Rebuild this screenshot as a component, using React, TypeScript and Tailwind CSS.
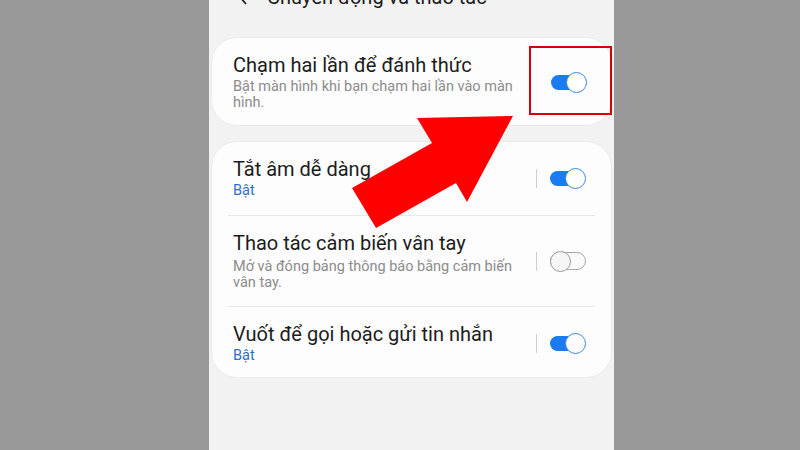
import React from "react";

const font = { fontFamily: "Roboto, 'Noto Sans', sans-serif" };

function Toggle({ on }: { on: boolean }) {
  if (on) {
    return (
      <div className="relative w-[36px] h-[21px] flex items-center shrink-0">
        <div className="w-[34px] h-[15px] rounded-full bg-[#1a7cf0]" />
        <div className="absolute right-0 top-0 w-[21px] h-[21px] rounded-full bg-white border-[1.5px] border-[#3f86d8]" />
      </div>
    );
  }
  return (
    <div className="relative w-[36px] h-[21px] flex items-center shrink-0">
      <div className="w-[36px] h-[18px] rounded-full border-[1.5px] border-[#a8a8a8] bg-[#fafafa]" />
      <div className="absolute left-0 top-0 w-[21px] h-[21px] rounded-full bg-[#f6f6f6] border-[1.5px] border-[#9a9a9a]" />
    </div>
  );
}

function Row({
  title,
  sub,
  on,
  blue,
  pad,
  gap,
}: {
  title: string;
  sub: string[];
  on: boolean;
  blue?: boolean;
  pad: string;
  gap: string;
}) {
  return (
    <div className={`flex items-center pl-[21px] pr-[25px] ${pad}`}>
      <div className="flex-1 min-w-0">
        <div className="text-[20px] leading-[24px] text-[#1c1c1c]">{title}</div>
        <div className={`${gap} text-[14.5px] leading-[16px] ${blue ? "text-[#2f6fc4]" : "text-[#8c8c8c]"}`}>
          {sub.map((s) => (
            <div key={s}>{s}</div>
          ))}
        </div>
      </div>
      <div className="w-[1px] h-[19px] bg-[#cfcfcf] mr-[13px]" />
      <Toggle on={on} />
    </div>
  );
}

export default function App() {
  return (
    <div className="relative w-[800px] h-[450px] flex overflow-hidden" style={font}>
      <div className="w-[209px] bg-[#999999]" />
      <div className="w-[405px] bg-[#f2f2f2] flex flex-col px-[2px] overflow-hidden">
        <div className="flex items-center mt-[-15px] h-[24px] pl-[27px] text-[20px] leading-[24px] text-[#1c1c1c]">
          <svg width="10" height="16" viewBox="0 0 10 16" className="mr-[19px]">
            <path d="M8 1 L2 8 L8 15" stroke="#222" strokeWidth="1.8" fill="none" />
          </svg>
          <span>Chuyển động và thao tác</span>
        </div>

        <div className="mt-[28px] rounded-[26px] bg-[#fdfdfd] border border-[#ebebeb] flex items-center pl-[21px] pr-[24px] pt-[15px] pb-[14px]">
          <div className="flex-1 min-w-0">
            <div className="text-[20px] leading-[24px] text-[#1c1c1c]">Chạm hai lần để đánh thức</div>
            <div className="mt-[2px] text-[14.5px] leading-[16px] text-[#8c8c8c]">
              <div>Bật màn hình khi bạn chạm hai lần vào màn</div>
              <div>hình.</div>
            </div>
          </div>
          <Toggle on />
        </div>

        <div className="mt-[15px] rounded-[26px] bg-[#fdfdfd] border border-[#ebebeb] flex flex-col">
          <Row title="Tắt âm dễ dàng" sub={["Bật"]} on blue pad="pt-[15px] pb-[16px]" gap="mt-[2px]" />
          <div className="mx-[16px] h-[1px] bg-[#e8e8e8]" />
          <Row
            title="Thao tác cảm biến vân tay"
            sub={["Mở và đóng bảng thông báo bằng cảm biến", "vân tay."]}
            on={false}
            pad="pt-[15px] pb-[15px]"
            gap="mt-[4px]"
          />
          <div className="mx-[16px] h-[1px] bg-[#e8e8e8]" />
          <Row title="Vuốt để gọi hoặc gửi tin nhắn" sub={["Bật"]} on blue pad="pt-[15px] pb-[13px]" gap="mt-[2px]" />
        </div>
      </div>
      <div className="flex-1 bg-[#999999]" />

      <div className="absolute left-[529px] top-[46px] w-[83px] h-[69px] border-2 border-[#d60000]" />
      <svg className="absolute left-0 top-0 pointer-events-none" width="800" height="450" viewBox="0 0 800 450">
        <polygon
          points="513,116 417,118 432,143 352,188 376,228 456,183 467,202"
          fill="#ff0000"
        />
      </svg>
    </div>
  );
}
